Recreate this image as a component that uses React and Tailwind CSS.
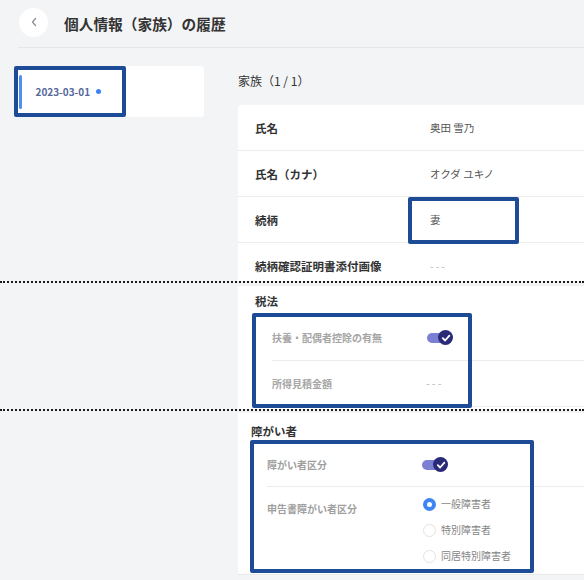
import React from "react";

const FONT = "font-['Noto_Sans_CJK_JP','Noto_Sans',sans-serif]";

function Toggle() {
  return (
    <div className="relative w-[26px] h-[15px] shrink-0">
      <div className="absolute left-0 top-[3px] w-[20px] h-[10px] rounded-full bg-[#7c80d2]" />
      <div className="absolute right-0 top-0 w-[15px] h-[15px] rounded-full bg-[#2b2a78] flex items-center justify-center">
        <svg width="10" height="10" viewBox="0 0 10 10" fill="none">
          <path d="M1.8 5.2 L4.1 7.5 L8.4 2.6" stroke="white" strokeWidth="1.8" strokeLinecap="round" strokeLinejoin="round" />
        </svg>
      </div>
    </div>
  );
}

function Radio({ checked, label }) {
  return (
    <div className="h-[26px] flex items-center">
      {checked ? (
        <div className="w-[13px] h-[13px] rounded-full border-[4px] border-[#3f86f4] bg-white shrink-0" />
      ) : (
        <div className="w-[13px] h-[13px] rounded-full border border-[#e3e3e3] bg-white shrink-0" />
      )}
      <span className="ml-[5px] text-[10px] text-[#858585] leading-[14px] whitespace-nowrap">{label}</span>
    </div>
  );
}

function Dotted() {
  return <div className="h-[2px] border-t-2 border-dotted border-[#1a1a1a] w-full" />;
}

function Row({ label, value, boxed }) {
  return (
    <div className="relative h-[46px] flex items-center border-b border-[#ececec] pl-[17px]">
      <div className="w-[175px] text-[11.5px] font-bold text-[#333] leading-[16px] whitespace-nowrap">{label}</div>
      <div className="text-[10.5px] text-[#555] leading-[16px] whitespace-nowrap">{value}</div>
      {boxed && (
        <div className="absolute left-[170px] top-0 w-[111px] h-[47px] border-[4px] border-[#1e4b96] rounded-[2px]" />
      )}
    </div>
  );
}

export default function App() {
  return (
    <div className={`w-[584px] h-[580px] bg-[#f3f4f6] overflow-hidden ${FONT}`}>
      {/* header */}
      <div className="h-[48px] ml-[18px] border-b border-[#e3e5e8] flex items-center">
        <div className="ml-[1px] w-[29px] h-[29px] rounded-full bg-white flex items-center justify-center -mt-[3px]">
          <svg width="8" height="10" viewBox="0 0 8 10" fill="none">
            <path d="M5.5 1.5 L2.5 5 L5.5 8.5" stroke="#8a8f98" strokeWidth="1.3" strokeLinecap="round" strokeLinejoin="round" />
          </svg>
        </div>
        <h1 className="ml-[16px] text-[14.7px] font-bold text-[#333] leading-[20px] whitespace-nowrap">個人情報（家族）の履歴</h1>
      </div>

      {/* fragment 1 */}
      <div className="h-[233px] overflow-hidden flex pl-[14px] pt-[18px]">
        <div className="relative w-[190px] h-[51px] bg-white rounded-[3px] flex items-center shrink-0">
          <div className="ml-[5px] w-[2.5px] h-[34px] bg-[#4d8ff5] rounded-full" />
          <span className="ml-[14px] text-[10px] font-bold text-[#56689b] leading-[14px]">2023-03-01</span>
          <span className="ml-[6px] w-[5px] h-[5px] rounded-full bg-[#3b82f6]" />
          <div className="absolute left-0 top-0 w-[112px] h-[51px] border-[4px] border-[#1e4b96] rounded-[2px]" />
        </div>
        <div className="ml-[34px] flex-1 pt-[7px]">
          <div className="text-[12px] text-[#333] leading-[16px] whitespace-nowrap">家族（1 / 1）</div>
          <div className="mt-[16px] bg-white rounded-tl-[3px]">
            <Row label="氏名" value="奥田 雪乃" />
            <Row label="氏名（カナ）" value="オクダ ユキノ" />
            <Row label="続柄" value="妻" boxed />
            <Row label="続柄確認証明書添付画像" value={<span className="text-[#bbb] tracking-[2px]">---</span>} />
          </div>
        </div>
      </div>

      <Dotted />

      {/* fragment 2 */}
      <div className="h-[126px] overflow-hidden flex">
        <div className="w-[238px] shrink-0" />
        <div className="relative flex-1 mt-[2px] bg-white border-t border-[#efefef]">
          <div className="h-[29px] pl-[17px] pt-[7px] text-[11.5px] font-bold text-[#333] leading-[16px]">税法</div>
          <div className="ml-[34px]">
            <div className="h-[46px] flex items-center border-b border-[#ececec]">
              <div className="w-[155px] text-[10px] font-bold text-[#a5a5a5] leading-[16px] whitespace-nowrap">扶養・配偶者控除の有無</div>
              <Toggle />
            </div>
            <div className="h-[46px] flex items-center border-b border-[#f0f0f0]">
              <div className="w-[154px] text-[10px] font-bold text-[#a5a5a5] leading-[16px] whitespace-nowrap">所得見積金額</div>
              <span className="text-[11px] text-[#bbb] tracking-[2px]">---</span>
            </div>
          </div>
          <div className="absolute left-[14px] top-[27px] w-[220px] h-[95px] border-[4px] border-[#1e4b96] rounded-[2px]" />
        </div>
      </div>

      <Dotted />

      {/* fragment 3 */}
      <div className="h-[169px] overflow-hidden flex">
        <div className="w-[238px] shrink-0" />
        <div className="relative flex-1 mt-[2px] self-start bg-white border-b border-[#e8e8e8]">
          <div className="h-[30px] pl-[13px] pt-[10px] text-[11.5px] font-bold text-[#333] leading-[16px]">障がい者</div>
          <div className="ml-[29px]">
            <div className="h-[44px] flex items-center border-b border-[#ececec]">
              <div className="w-[155px] text-[10px] font-bold text-[#9f9f9f] leading-[16px] whitespace-nowrap">障がい者区分</div>
              <Toggle />
            </div>
            <div className="h-[87px] flex items-start">
              <div className="w-[156px] pt-[14px] text-[10px] font-bold text-[#9f9f9f] leading-[16px] whitespace-nowrap">申告書障がい者区分</div>
              <div className="pt-[4px]">
                <Radio checked label="一般障害者" />
                <Radio label="特別障害者" />
                <Radio label="同居特別障害者" />
              </div>
            </div>
          </div>
          <div className="absolute left-[12px] top-[27px] w-[284px] h-[133px] border-[4px] border-[#1e4b96] rounded-[2px]" />
        </div>
      </div>
    </div>
  );
}
